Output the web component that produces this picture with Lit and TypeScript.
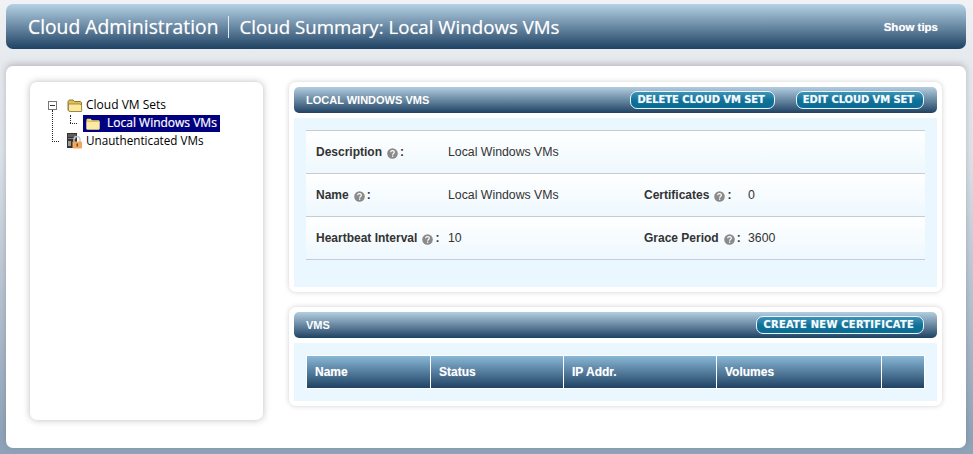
import { LitElement, html, css, svg } from "lit";
import { customElement } from "lit/decorators.js";

const help = html`<svg class="help" viewBox="0 0 10 10" width="11" height="11"><circle cx="5" cy="5" r="4.8" fill="#8a8a8a"/><path d="M3.3 3.9C3.4 2.8 4.1 2.3 5 2.3c1 0 1.7.6 1.7 1.4 0 1.2-1.5 1.2-1.6 2.4" fill="none" stroke="#fff" stroke-width="1.1"/><rect x="4.5" y="6.8" width="1.2" height="1.2" fill="#fff"/></svg>`;

const openFolder = svg`<svg width="16" height="13" viewBox="0 0 16 13"><path d="M1 3C1 1.700 2 1 3 1h3l1.500 1.500H13c1 0 1.500.7 1.500 1.500v7.500c0 .6-.4 1-1 1H3c-1 0-2-.8-2-2z" fill="#e3bf50" stroke="#7a6c30" stroke-width=".9"/><path d="M1.500 5h11c.8 0 1.500.6 2 1.300l.3 5.700c0 .3-.3.5-.8.5H3.500c-1 0-1.800-.6-2-1.500z" fill="#fbe89a" stroke="#8f7c38" stroke-width=".8"/></svg>`;

const closedFolder = svg`<svg width="14" height="12" viewBox="0 0 14 12"><path d="M.5 2C.5 1.200 1 .8 1.700.8h3l1.200 1.400h6.400c.7 0 1.200.5 1.200 1.200v7c0 .6-.4 1-1 1H1.500c-.6 0-1-.4-1-1z" fill="#f5d877"/><path d="M.5 3.400h13V10.400c0 .6-.4 1-1 1H1.500c-.6 0-1-.4-1-1z" fill="#fbe9a6"/><path d="M.5 3.400h13" stroke="#d9b050" stroke-width=".8"/></svg>`;

const lockedServer = svg`<svg width="16" height="16" viewBox="0 0 16 16"><rect x="0" y="0" width="10" height="15" fill="#333"/><rect x="1" y="1" width="8" height="3" fill="#5c5c5c"/><rect x="1" y="5" width="8" height="1" fill="#808080"/><rect x="1" y="8" width="3" height="5" fill="#999"/><path d="M7 9V6.500a3 3 0 0 1 6 0V9" fill="none" stroke="#c9c9c9" stroke-width="1.400"/><rect x="5.500" y="8.500" width="9.500" height="7" rx="1" fill="#f0a860"/><rect x="9.500" y="10.500" width="1.500" height="3" fill="#7a4a20"/></svg>`;

@customElement("app-root")
export class AppRoot extends LitElement {
  static styles = css`
    :host {
      display: block;
      width: 973px;
      height: 454px;
      overflow: hidden;
      font-family: "Liberation Sans", Arial, sans-serif;
      color: #333;
    }
    .page {
      box-sizing: border-box;
      height: 454px;
      padding: 4px 7px 6px 6px;
      display: flex;
      flex-direction: column;
      gap: 17px;
      background: linear-gradient(#f0f2f5 0, #e6e9ed 60px, #dfe4ea 150px, #8fa3b8 440px);
    }
    .top {
      height: 45px;
      flex: none;
      display: flex;
      align-items: center;
      padding: 0 28px 0 22px;
      border-radius: 7px;
      background: linear-gradient(#b5d1e5, #1f4263);
      color: #fff;
      text-shadow: 0 0 1px rgba(255, 255, 255, 0.55);
    }
    .app {
      font: 19.300px/22px "Open Sans", sans-serif;
      padding-right: 10px;
      border-right: 1px solid #e6eef4;
      height: 22px;
      white-space: nowrap;
    }
    .crumb {
      font: 18.700px/22px "Open Sans", sans-serif;
      padding-left: 10px;
      white-space: nowrap;
    }
    .tips {
      margin-left: auto;
      font-weight: bold;
      font-size: 11.500px;
    }
    .main {
      flex: 1;
      display: flex;
      gap: 26px;
      padding: 16px 24px 28px 24px;
      background: #fff;
      border-radius: 7px;
      box-shadow: 0 -2px 6px rgba(60, 70, 80, 0.28);
    }
    .tree-card {
      width: 233px;
      flex: none;
      box-sizing: border-box;
      padding: 14px 0 0 18px;
      background: #fff;
      border-radius: 7px;
      box-shadow: 0 0 7px rgba(60, 60, 60, 0.35);
      font: 12px/18px "Open Sans", sans-serif;
      color: #000;
    }
    .node {
      display: flex;
      align-items: center;
      height: 18px;
      white-space: nowrap;
    }
    .expander {
      box-sizing: border-box;
      width: 9px;
      height: 9px;
      border: 1px solid #777;
      position: relative;
      background: #fff;
      margin-right: 10px;
    }
    .expander::after {
      content: "";
      position: absolute;
      left: 1px;
      right: 1px;
      top: 3px;
      height: 1px;
      background: #333;
    }
    .v-stem {
      position: relative;
    }
    .v-stem::before {
      content: "";
      position: absolute;
      left: 4px;
      top: 14px;
      height: 32px;
      border-left: 1px dotted #222;
    }
    .dash {
      position: relative;
      width: 7px;
      margin: 0 4px;
      border-top: 1px dotted #222;
      height: 0;
      align-self: center;
    }
    .child .dash {
      margin-right: 6px;
    }
    .child .dash::before {
      content: "";
      position: absolute;
      left: 0;
      top: -9px;
      height: 8px;
      border-left: 1px dotted #222;
    }
    .child {
      padding-left: 18px;
    }
    .selected {
      display: flex;
      align-items: center;
      height: 17px;
      margin-top: 1px;
      padding: 0 3px;
      background: #000080;
      color: #fff;
      -webkit-text-stroke: 0.2px #fff;
      gap: 7px;
    }
    .selected .sel-text {
      margin-bottom: 2px;
    }
    .node svg {
      flex: none;
    }
    .label {
      margin-left: 3px;
    }
    .label.tight {
      font-size: 11.700px;
      margin-bottom: 2px;
    }
    .spacer {
      width: 4px;
    }
    .right {
      flex: 1;
      display: flex;
      flex-direction: column;
      gap: 15px;
    }
    .card {
      background: #fff;
      padding: 5px;
      border-radius: 7px;
      box-shadow: 0 0 5px rgba(70, 70, 70, 0.25);
      display: flex;
      flex-direction: column;
      gap: 5px;
    }
    .card-head {
      height: 26px;
      display: flex;
      align-items: center;
      padding: 0 13px 0 12px;
      gap: 21px;
      border-radius: 5px;
      background: linear-gradient(#b3cee1, #1f4263);
      color: #fff;
      font-weight: bold;
      font-size: 11px;
    }
    .card-head .title {
      margin-right: auto;
    }
    .btn {
      box-sizing: border-box;
      height: 18px;
      display: flex;
      align-items: center;
      padding: 0 9px 2px 6px;
      border: 1px solid #e8f6fb;
      border-radius: 7px;
      background: linear-gradient(#3d93b5 0, #0f7099 55%, #0a6c92 100%);
      color: #f4fbfe;
      font: bold 10px "DejaVu Sans", sans-serif;
      letter-spacing: -0.1px;
      text-shadow: 0 0 1px rgba(255, 255, 255, 0.5);
      white-space: nowrap;
    }
    .btn.wide {
      letter-spacing: 0.2px;
    }
    .body {
      background: #eaf7fe;
      padding: 12px 12px 0 12px;
    }
    .body.details {
      height: 169px;
      box-sizing: border-box;
    }
    .row {
      display: grid;
      grid-template-columns: 132px 196px 104px 1fr;
      align-items: center;
      height: 42px;
      border-top: 1px solid #c6ccd3;
      background: linear-gradient(#ffffff, #eef8fe);
      padding-left: 10px;
      font-size: 12px;
    }
    .row:last-child {
      border-bottom: 1px solid #c6ccd3;
    }
    .key {
      font-weight: bold;
      color: #333;
      display: flex;
      align-items: center;
      white-space: nowrap;
    }
    .colon {
      margin-left: 2px;
    }
    .help {
      margin-left: 5px;
      margin-top: 2px;
    }
    .val {
      font-size: 12.300px;
      color: #333;
    }
    .grid {
      box-sizing: border-box;
      display: grid;
      grid-template-columns: 124px 133px 153px 165px 1fr;
      height: 34px;
      border: 1px solid #fff;
      margin-bottom: 11px;
    }
    .body.vms {
      padding-bottom: 1px;
    }
    .th {
      display: flex;
      align-items: center;
      padding-left: 8px;
      border-right: 1px solid #fff;
      background: linear-gradient(#8ab7d6, #1f4263);
      color: #fff;
      font-weight: bold;
      font-size: 12px;
      text-shadow: 0 0 1px rgba(255, 255, 255, 0.4);
    }
    .th:last-child {
      border-right: 0;
    }
  `;

  private row(a: string, av: string, b?: string, bv?: string) {
    return html`<div class="row">
      <div class="key">${a}${help}<span class="colon">:</span></div>
      <div class="val">${av}</div>
      ${b
        ? html`<div class="key">${b}${help}<span class="colon">:</span></div>
            <div class="val">${bv}</div>`
        : html`<div></div><div></div>`}
    </div>`;
  }

  render() {
    return html`<div class="page">
      <header class="top">
        <div class="app">Cloud Administration</div>
        <div class="crumb">Cloud Summary: Local Windows VMs</div>
        <div class="tips">Show tips</div>
      </header>
      <main class="main">
        <aside class="tree-card">
          <div class="v-stem">
            <div class="node">
              <span class="expander"></span>${openFolder}<span class="label">Cloud VM Sets</span>
            </div>
            <div class="node child">
              <span class="dash"></span>
              <span class="selected">${closedFolder}<span class="sel-text">Local Windows VMs</span></span>
            </div>
            <div class="node">
              <span class="dash"></span><span class="spacer"></span>${lockedServer}<span class="label tight">Unauthenticated VMs</span>
            </div>
          </div>
        </aside>
        <div class="right">
          <section class="card">
            <div class="card-head">
              <span class="title">LOCAL WINDOWS VMS</span>
              <span class="btn">DELETE CLOUD VM SET</span>
              <span class="btn">EDIT CLOUD VM SET</span>
            </div>
            <div class="body details">
              ${this.row("Description", "Local Windows VMs")}
              ${this.row("Name", "Local Windows VMs", "Certificates", "0")}
              ${this.row("Heartbeat Interval", "10", "Grace Period", "3600")}
            </div>
          </section>
          <section class="card">
            <div class="card-head">
              <span class="title">VMS</span>
              <span class="btn wide">CREATE NEW CERTIFICATE</span>
            </div>
            <div class="body vms">
              <div class="grid">
                <div class="th">Name</div>
                <div class="th">Status</div>
                <div class="th">IP Addr.</div>
                <div class="th">Volumes</div>
                <div class="th"></div>
              </div>
            </div>
          </section>
        </div>
      </main>
    </div>`;
  }
}
